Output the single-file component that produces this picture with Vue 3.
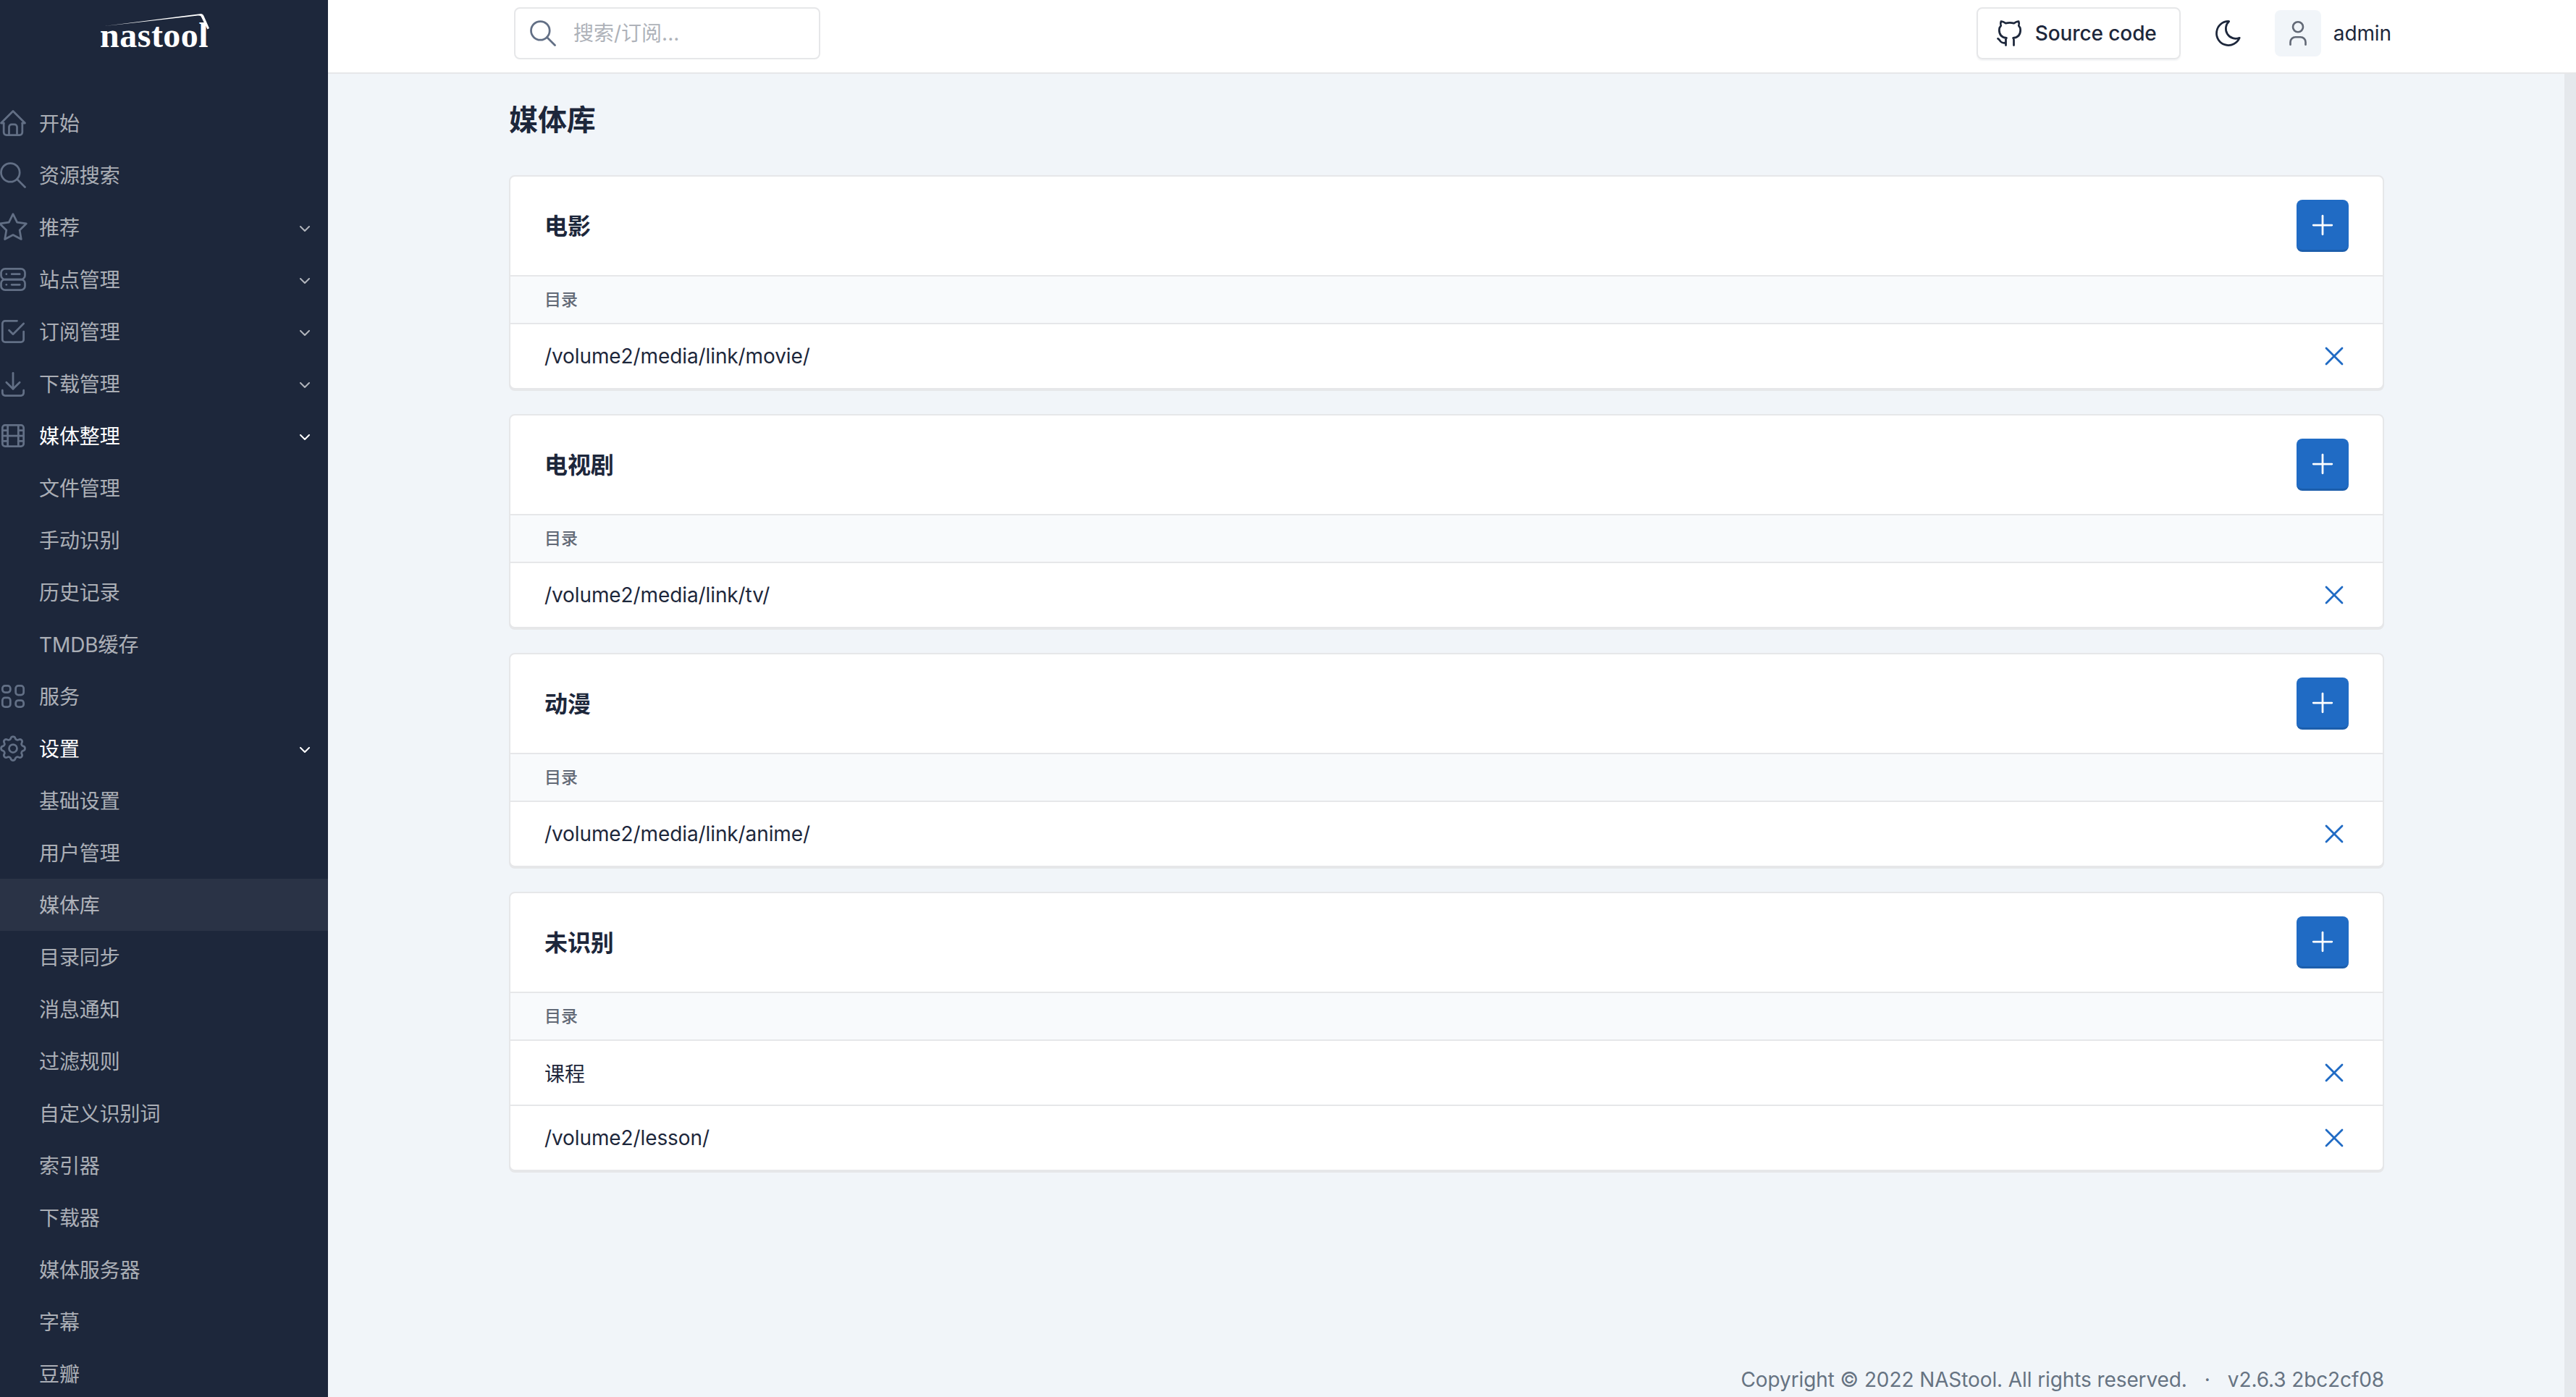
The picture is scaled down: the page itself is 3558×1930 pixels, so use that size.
<script setup>
import { h } from 'vue'

// outline icons, all drawn on a 24 grid
const Icon = (props) =>
  h(
    'svg',
    { viewBox: '0 0 24 24', fill: 'none', stroke: 'currentColor', 'stroke-width': 1.5, 'stroke-linecap': 'round', 'stroke-linejoin': 'round' },
    props.d.map((d) => h('path', { d }))
  )
Icon.props = ['d']

const icons = {
  home: ['M5 12l-2 0l9 -9l9 9l-2 0', 'M5 12v7a2 2 0 0 0 2 2h10a2 2 0 0 0 2 -2v-7', 'M9 21v-6a2 2 0 0 1 2 -2h2a2 2 0 0 1 2 2v6'],
  search: ['M3 10a7 7 0 1 0 14 0a7 7 0 1 0 -14 0', 'M21 21l-6 -6'],
  star: ['M12 17.75l-6.172 3.245l1.179 -6.873l-5 -4.867l6.9 -1l3.086 -6.253l3.086 6.253l6.9 1l-5 4.867l1.179 6.873z'],
  server: [
    'M3 7a3 3 0 0 1 3 -3h12a3 3 0 0 1 3 3v2a3 3 0 0 1 -3 3h-12a3 3 0 0 1 -3 -3z',
    'M3 15a3 3 0 0 1 3 -3h12a3 3 0 0 1 3 3v2a3 3 0 0 1 -3 3h-12a3 3 0 0 1 -3 -3z',
    'M7 8l0 .01', 'M7 16l0 .01', 'M11 8h6', 'M11 16h6'
  ],
  check: ['M9 11l3 3l8 -8', 'M20 12v6a2 2 0 0 1 -2 2h-12a2 2 0 0 1 -2 -2v-12a2 2 0 0 1 2 -2h9'],
  download: ['M4 17v2a2 2 0 0 0 2 2h12a2 2 0 0 0 2 -2v-2', 'M7 11l5 5l5 -5', 'M12 4l0 12'],
  movie: [
    'M4 6a2 2 0 0 1 2 -2h12a2 2 0 0 1 2 2v12a2 2 0 0 1 -2 2h-12a2 2 0 0 1 -2 -2z',
    'M8 4l0 16', 'M16 4l0 16', 'M4 8l4 0', 'M4 16l4 0', 'M4 12l16 0', 'M16 8l4 0', 'M16 16l4 0'
  ],
  apps: [
    'M4 6a2 2 0 0 1 2 -2h2a2 2 0 0 1 2 2v1a2 2 0 0 1 -2 2h-2a2 2 0 0 1 -2 -2z',
    'M4 15a2 2 0 0 1 2 -2h2a2 2 0 0 1 2 2v3a2 2 0 0 1 -2 2h-2a2 2 0 0 1 -2 -2z',
    'M14 6a2 2 0 0 1 2 -2h2a2 2 0 0 1 2 2v3a2 2 0 0 1 -2 2h-2a2 2 0 0 1 -2 -2z',
    'M14 17a2 2 0 0 1 2 -2h2a2 2 0 0 1 2 2v1a2 2 0 0 1 -2 2h-2a2 2 0 0 1 -2 -2z'
  ],
  settings: [
    'M10.325 4.317c.426 -1.756 2.924 -1.756 3.35 0a1.724 1.724 0 0 0 2.573 1.066c1.543 -.94 3.31 .826 2.37 2.37a1.724 1.724 0 0 0 1.065 2.572c1.756 .426 1.756 2.924 0 3.35a1.724 1.724 0 0 0 -1.066 2.573c.94 1.543 -.826 3.31 -2.37 2.37a1.724 1.724 0 0 0 -2.572 1.065c-.426 1.756 -2.924 1.756 -3.35 0a1.724 1.724 0 0 0 -2.573 -1.066c-1.543 .94 -3.31 -.826 -2.37 -2.37a1.724 1.724 0 0 0 -1.065 -2.572c-1.756 -.426 -1.756 -2.924 0 -3.35a1.724 1.724 0 0 0 1.066 -2.573c-.94 -1.543 .826 -3.31 2.37 -2.37c1 .608 2.296 .07 2.572 -1.065z',
    'M9 12a3 3 0 1 0 6 0a3 3 0 1 0 -6 0'
  ],
  github: ['M9 19c-4.3 1.4 -4.3 -2.5 -6 -3m12 5v-3.5c0 -1 .1 -1.4 -.5 -2c2.8 -.3 5.5 -1.4 5.5 -6a4.6 4.6 0 0 0 -1.3 -3.2a4.2 4.2 0 0 0 -.1 -3.2s-1.1 -.3 -3.5 1.3a12.3 12.3 0 0 0 -6.2 0c-2.4 -1.6 -3.5 -1.3 -3.5 -1.3a4.2 4.2 0 0 0 -.1 3.2a4.6 4.6 0 0 0 -1.3 3.2c0 4.6 2.7 5.7 5.5 6c-.6 .6 -.6 1.2 -.5 2v3.5'],
  moon: ['M12 3c.132 0 .263 0 .393 0a7.5 7.5 0 0 0 7.92 12.446a9 9 0 1 1 -8.313 -12.454z'],
  user: ['M8 7a4 4 0 1 0 8 0a4 4 0 1 0 -8 0', 'M6 21v-2a4 4 0 0 1 4 -4h4a4 4 0 0 1 4 4v2'],
  plus: ['M12 5l0 14', 'M5 12l14 0'],
  close: ['M18 6l-12 12', 'M6 6l12 12']
}

const menu = [
  { name: '开始', icon: 'home' },
  { name: '资源搜索', icon: 'search' },
  { name: '推荐', icon: 'star', arrow: true },
  { name: '站点管理', icon: 'server', arrow: true },
  { name: '订阅管理', icon: 'check', arrow: true },
  { name: '下载管理', icon: 'download', arrow: true },
  { name: '媒体整理', icon: 'movie', arrow: true, open: true },
  { name: '文件管理' },
  { name: '手动识别' },
  { name: '历史记录' },
  { name: 'TMDB缓存' },
  { name: '服务', icon: 'apps' },
  { name: '设置', icon: 'settings', arrow: true, open: true },
  { name: '基础设置' },
  { name: '用户管理' },
  { name: '媒体库', current: true },
  { name: '目录同步' },
  { name: '消息通知' },
  { name: '过滤规则' },
  { name: '自定义识别词' },
  { name: '索引器' },
  { name: '下载器' },
  { name: '媒体服务器' },
  { name: '字幕' },
  { name: '豆瓣' }
]

const libraries = [
  { title: '电影', dirs: ['/volume2/media/link/movie/'] },
  { title: '电视剧', dirs: ['/volume2/media/link/tv/'] },
  { title: '动漫', dirs: ['/volume2/media/link/anime/'] },
  { title: '未识别', dirs: ['课程', '/volume2/lesson/'] }
]
</script>

<template>
  <div class="app">
    <aside class="sidebar">
      <div class="logo">
        <span class="logo-text">nastool</span>
        <svg class="logo-roof" viewBox="0 0 150 26">
          <path d="M2 20 L133 3.2 Q137 2.6 138.5 6 L146 23 L143.5 24.5 L134.5 6.6 Q133.5 5.2 130 5.5 Z" fill="#fff" />
        </svg>
      </div>
      <nav>
        <a v-for="item in menu" :key="item.name" class="nav-item" :class="{ current: item.current, open: item.open }">
          <span class="nav-icon"><Icon v-if="item.icon" :d="icons[item.icon]" /></span>
          <span class="nav-name">{{ item.name }}</span>
          <svg v-if="item.arrow" class="nav-arrow" viewBox="0 0 14 8">
            <path d="M1 1l6 6l6 -6" fill="none" stroke="currentColor" stroke-width="2" stroke-linecap="round" stroke-linejoin="round" />
          </svg>
        </a>
      </nav>
    </aside>

    <div class="right">
      <header class="topbar">
        <label class="search">
          <Icon class="search-icon" :d="icons.search" />
          <input type="text" placeholder="搜索/订阅..." />
        </label>
        <div class="top-actions">
          <a class="source-btn"><Icon class="source-icon" :d="icons.github" />Source code</a>
          <Icon class="moon" :d="icons.moon" />
          <span class="avatar"><Icon :d="icons.user" /></span>
          <span class="username">admin</span>
        </div>
      </header>

      <div class="body">
        <main class="content">
          <h2 class="page-title">媒体库</h2>
          <section v-for="lib in libraries" :key="lib.title" class="card">
            <div class="card-header">
              <h3>{{ lib.title }}</h3>
              <button class="add-btn"><Icon :d="icons.plus" /></button>
            </div>
            <div class="table-head"><span>目录</span></div>
            <div v-for="dir in lib.dirs" :key="dir" class="table-row">
              <span>{{ dir }}</span>
              <Icon class="remove" :d="icons.close" />
            </div>
          </section>
          <footer class="footer">
            <span>Copyright © 2022 NAStool. All rights reserved.</span>
            <span class="dot">·</span>
            <span>v2.6.3 2bc2cf08</span>
          </footer>
        </main>
        <div class="scrollbar"></div>
      </div>
    </div>
  </div>
</template>

<style>
html, body {
  margin: 0;
  overflow: hidden;
}
</style>

<style scoped>
.app {
  display: flex;
  height: 100vh;
  overflow: hidden;
  background: #f1f5f9;
  color: #1d273b;
  font-family: Inter, "Noto Sans CJK SC", sans-serif;
  font-size: 28px;
  letter-spacing: -0.1px;
}

.sidebar {
  width: 453px;
  flex-shrink: 0;
  background: #1d273b;
  overflow: hidden;
}
.logo {
  position: relative;
  height: 134px;
  box-sizing: border-box;
  padding: 19px 0 0 138px;
}
.logo-text {
  font-family: "Liberation Serif", serif;
  font-weight: 700;
  font-size: 48px;
  letter-spacing: 0.5px;
  line-height: 60px;
  color: #fff;
}
.logo-roof {
  position: absolute;
  left: 143px;
  top: 16px;
  width: 150px;
  height: 26px;
}
.nav-item {
  display: flex;
  align-items: center;
  height: 72px;
  padding-right: 25px;
  color: rgba(255, 255, 255, 0.65);
}
.nav-item.open {
  color: #fff;
}
.nav-item.current {
  background: rgba(255, 255, 255, 0.06);
}
.nav-icon {
  width: 36px;
  margin-right: 18px;
  display: flex;
  justify-content: center;
  color: #626f85;
}
.nav-icon svg {
  width: 44px;
  height: 44px;
  flex-shrink: 0;
}
.nav-name {
  flex: 1;
  margin-top: -2px;
}
.nav-arrow {
  width: 14px;
  height: 8px;
  margin-top: 4px;
}

.right {
  flex: 1;
  min-width: 0;
  display: flex;
  flex-direction: column;
}
.topbar {
  height: 92px;
  flex-shrink: 0;
  display: flex;
  align-items: center;
  justify-content: space-between;
  padding: 0 255px 8px 257px;
  background: #fff;
  border-bottom: 2px solid #e6e7e9;
}
.search {
  width: 423px;
  height: 72px;
  box-sizing: border-box;
  display: flex;
  align-items: center;
  padding-left: 16px;
  border: 2px solid #e6e7e9;
  border-radius: 8px;
}
.search-icon {
  width: 44px;
  height: 44px;
  margin-right: 20px;
  color: #626f85;
}
.search input {
  border: none;
  outline: none;
  width: 300px;
  padding: 0;
  font: inherit;
  color: inherit;
}
.search input::placeholder {
  color: #aeb2b9;
}
.top-actions {
  display: flex;
  align-items: center;
}
.source-btn {
  width: 282px;
  height: 72px;
  box-sizing: border-box;
  display: flex;
  align-items: center;
  padding-left: 22px;
  border: 2px solid #e6e7e9;
  border-radius: 8px;
  box-shadow: 0 2px 2px rgba(29, 39, 59, 0.05);
  font-weight: 500;
}
.source-icon {
  width: 44px;
  height: 44px;
  margin-right: 13px;
}
.moon {
  width: 44px;
  height: 44px;
  margin-left: 44px;
  margin-right: 42px;
}
.avatar {
  width: 64px;
  height: 64px;
  display: flex;
  align-items: center;
  justify-content: center;
  border-radius: 8px;
  background: #f1f5f9;
  color: #626976;
}
.avatar svg {
  width: 42px;
  height: 42px;
}
.username {
  margin-left: 17px;
}

.body {
  flex: 1;
  min-height: 0;
  display: flex;
}
.content {
  flex: 1;
  min-width: 0;
  display: flex;
  flex-direction: column;
  padding: 0 249px 0 250px;
}
.page-title {
  margin: 0;
  height: 140px;
  display: flex;
  align-items: center;
  font-size: 40px;
  font-weight: 600;
  line-height: 1;
  padding-bottom: 12px;
  box-sizing: border-box;
}
.scrollbar {
  width: 16px;
  flex-shrink: 0;
  background: #e5e8ec;
}
.card {
  background: #fff;
  border: 2px solid #e6e7e9;
  border-radius: 8px;
  box-shadow: 0 2px 0 #e6e7e9;
  margin-bottom: 34px;
  overflow: hidden;
}
.card-header {
  display: flex;
  align-items: center;
  justify-content: space-between;
  padding: 32px 47px;
  border-bottom: 2px solid #e6e7e9;
}
.card-header h3 {
  margin: 0 0 4px;
  font-size: 32px;
  font-weight: 600;
}
.add-btn {
  width: 72px;
  height: 72px;
  padding: 0;
  display: flex;
  align-items: center;
  justify-content: center;
  border: none;
  border-bottom: 3px solid #1c5eac;
  border-radius: 8px;
  background: #206bc4;
  color: #fff;
}
.add-btn svg {
  width: 44px;
  height: 44px;
}
.table-head {
  height: 64px;
  display: flex;
  align-items: center;
  padding: 0 47px;
  background: #f8fafc;
  border-bottom: 2px solid #e6e7e9;
  color: #626976;
  font-size: 23px;
  font-weight: 500;
}
.table-head span {
  margin-bottom: 4px;
}
.table-row {
  height: 88px;
  display: flex;
  align-items: center;
  justify-content: space-between;
  padding: 0 45px 0 47px;
}
.table-row + .table-row {
  border-top: 2px solid #e6e7e9;
}
.remove {
  width: 44px;
  height: 44px;
  color: #206bc4;
}
.footer {
  margin-top: auto;
  height: 41px;
  display: flex;
  justify-content: flex-end;
  color: #667382;
}
.dot {
  margin: 0 24px;
}
</style>
